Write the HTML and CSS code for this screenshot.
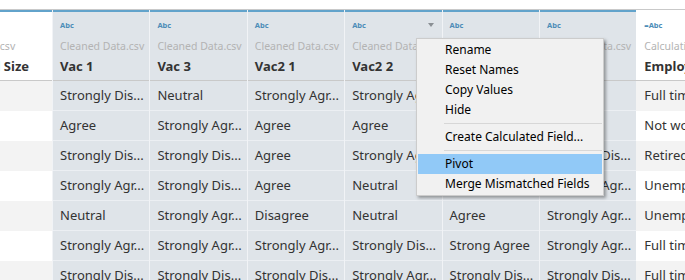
FILE: index.html
```html
<!DOCTYPE html>
<html>
<head>
<meta charset="utf-8">
<link rel="stylesheet" href="styles.css">
</head>
<body>
<div class="sheet">
  <div class="table">
    <div class="col plain first">
      <div class="hd"><div class="typerow"><span class="type"></span></div><div class="src">Cleaned Data.csv</div><div class="name">Household Size</div></div>
      <div class="cell"></div><div class="cell"></div><div class="cell"></div><div class="cell"></div><div class="cell"></div><div class="cell"></div><div class="cell"></div>
    </div>
    <div class="col sel">
      <div class="hd"><div class="typerow"><span class="type">Abc</span></div><div class="src">Cleaned Data.csv</div><div class="name">Vac 1</div></div>
      <div class="cell">Strongly Dis...</div><div class="cell">Agree</div><div class="cell">Strongly Dis...</div><div class="cell">Strongly Agr...</div><div class="cell">Neutral</div><div class="cell">Strongly Agr...</div><div class="cell">Strongly Dis...</div>
    </div>
    <div class="col sel">
      <div class="hd"><div class="typerow"><span class="type">Abc</span></div><div class="src">Cleaned Data.csv</div><div class="name">Vac 3</div></div>
      <div class="cell">Neutral</div><div class="cell">Strongly Agr...</div><div class="cell">Strongly Dis...</div><div class="cell">Strongly Dis...</div><div class="cell">Strongly Agr...</div><div class="cell">Strongly Agr...</div><div class="cell">Strongly Dis...</div>
    </div>
    <div class="col sel">
      <div class="hd"><div class="typerow"><span class="type">Abc</span></div><div class="src">Cleaned Data.csv</div><div class="name">Vac2 1</div></div>
      <div class="cell">Strongly Agr...</div><div class="cell">Agree</div><div class="cell">Agree</div><div class="cell">Agree</div><div class="cell">Disagree</div><div class="cell">Strongly Agr...</div><div class="cell">Strongly Dis...</div>
    </div>
    <div class="col sel">
      <div class="hd"><div class="typerow"><span class="type">Abc</span><span class="caret"></span></div><div class="src">Cleaned Data.csv</div><div class="name">Vac2 2</div></div>
      <div class="cell">Strongly Agr...</div><div class="cell">Agree</div><div class="cell">Strongly Agr...</div><div class="cell">Neutral</div><div class="cell">Neutral</div><div class="cell">Strongly Dis...</div><div class="cell">Strongly Agr...</div>
    </div>
    <div class="col sel">
      <div class="hd"><div class="typerow"><span class="type">Abc</span></div><div class="src">Cleaned Data.csv</div><div class="name">Vac2 3</div></div>
      <div class="cell">Agree</div><div class="cell">Neutral</div><div class="cell">Agree</div><div class="cell">Neutral</div><div class="cell">Agree</div><div class="cell">Strong Agree</div><div class="cell">Strongly Dis...</div>
    </div>
    <div class="col sel">
      <div class="hd"><div class="typerow"><span class="type">Abc</span></div><div class="src">Cleaned Data.csv</div><div class="name">Vac2 4</div></div>
      <div class="cell">Neutral</div><div class="cell">Agree</div><div class="cell">Strongly Dis...</div><div class="cell">Strongly Agr...</div><div class="cell">Strongly Agr...</div><div class="cell">Strongly Agr...</div><div class="cell">Strongly Dis...</div>
    </div>
    <div class="col plain last">
      <div class="hd"><div class="typerow"><span class="type">=Abc</span></div><div class="src">Calculation</div><div class="name">Employment</div></div>
      <div class="cell">Full time</div><div class="cell">Not working</div><div class="cell">Retired</div><div class="cell">Unemployed</div><div class="cell">Unemployed</div><div class="cell">Full time</div><div class="cell">Full time</div>
    </div>
  </div>
  <div class="menu">
    <div class="item">Rename</div>
    <div class="item">Reset Names</div>
    <div class="item">Copy Values</div>
    <div class="item">Hide</div>
    <div class="sep sep1"></div>
    <div class="item">Create Calculated Field...</div>
    <div class="sep sep2"></div>
    <div class="item active">Pivot</div>
    <div class="item">Merge Mismatched Fields</div>
  </div>
</div>
</body>
</html>
```

FILE: styles.css
```css
html, body {
  margin: 0;
  padding: 0;
  background: #ffffff;
  overflow: hidden;
  width: 685px;
  height: 280px;
}

.sheet {
  position: relative;
  padding-top: 9px;
  font-family: "Noto Sans", "Open Sans", sans-serif;
}

.table {
  display: flex;
  border-top: 1px solid #c9c9c9;
  margin-left: -77px;
  width: 900px;
}

.col {
  display: flex;
  flex-direction: column;
  flex: 0 0 97.4px;
  width: 97.4px;
  overflow: hidden;
  box-sizing: border-box;
}

.col.first {
  flex-basis: 129px;
  width: 129px;
}

.col.last {
  flex-basis: 140px;
  width: 140px;
}

.hd {
  box-sizing: border-box;
  height: 71px;
  border-top: 2px solid #62a3cb;
  border-bottom: 1px solid #c9c9c9;
  padding: 8px 0 0 8px;
  white-space: nowrap;
}

.col.sel .hd {
  background: #dfe4e9;
}

.col.sel {
  border-left: 1px solid #f1f3f6;
}

.col.sel .hd,
.col.sel .cell {
  padding-left: 7px;
}

.col.last .hd {
  border-top-color: #ffffff;
  background: #ffffff;
}

.col.first .hd {
  background: #ffffff;
}

.col.first .src {
  text-align: right;
  padding-right: 38px;
}

.col.first .name {
  text-align: right;
  padding-right: 25px;
}

.typerow {
  display: flex;
  justify-content: space-between;
  align-items: center;
  height: 10px;
  padding-right: 8px;
}

.type {
  font-size: 7.5px;
  font-weight: 700;
  color: #4d8db8;
  line-height: 10px;
}

.caret {
  width: 0;
  height: 0;
  border-left: 3.5px solid transparent;
  border-right: 3.5px solid transparent;
  border-top: 4px solid #8a8f94;
}

.src {
  margin-top: 9px;
  font-size: 10.5px;
  line-height: 14px;
  color: #b3b3b3;
  overflow: hidden;
}

.name {
  margin-top: 4px;
  font-size: 13px;
  font-weight: 700;
  line-height: 18px;
  color: #333333;
}

.cell {
  box-sizing: border-box;
  height: 30px;
  line-height: 29px;
  padding-left: 8px;
  font-size: 13px;
  color: #333333;
  white-space: nowrap;
  overflow: hidden;
}

.col.plain .cell:nth-of-type(odd) {
  background: #ffffff;
}

.col.plain .cell:nth-of-type(even) {
  background: #f3f3f3;
}

.col.sel .cell {
  background: #dfe4e9;
  border-bottom: 1px solid #eceff3;
}

.menu {
  position: absolute;
  left: 416px;
  top: 38px;
  width: 188px;
  box-sizing: border-box;
  background: #f1f1f1;
  border: 1px solid #cccccc;
  box-shadow: 2px 2px 3px rgba(0, 0, 0, 0.35);
  padding: 1px;
  font-family: "Noto Sans", "Open Sans", sans-serif;
  font-size: 12px;
  color: #000000;
}

.item {
  height: 20px;
  line-height: 20px;
  padding-left: 27px;
  white-space: nowrap;
}

.item.active {
  background: #91c9f7;
}

.sep {
  margin-left: 26px;
  border-top: 1px solid #d7d7d7;
}

.sep1 {
  margin-top: 3px;
  margin-bottom: 3px;
}

.sep2 {
  margin-top: 3px;
  margin-bottom: 3px;
}
```
